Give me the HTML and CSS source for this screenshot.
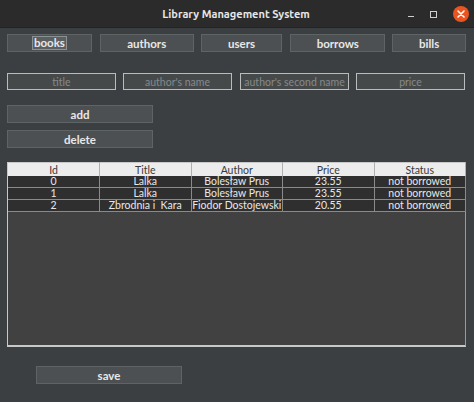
FILE: index.html
```html
<!DOCTYPE html>
<html lang="en">

<head>
    <meta charset="UTF-8">
    <title>Library Management System</title>
    <link rel="stylesheet" href="styles.css">
</head>

<body>
    <!-- Window title bar -->
    <header class="titlebar">
        <span class="title">Library Management System</span>
        <div class="controls">
            <span class="ctl min"></span>
            <span class="ctl max"></span>
            <span class="ctl close">
                <svg width="8" height="8" viewBox="0 0 8 8">
                    <path d="M1 1 L7 7 M7 1 L1 7" stroke="#fff" stroke-width="1.6" stroke-linecap="round" />
                </svg>
            </span>
        </div>
    </header>

    <div class="window">
        <!-- Navigation -->
        <nav class="nav">
            <button class="btn nav-books"><span class="focus">books</span></button>
            <button class="btn nav-authors">authors</button>
            <button class="btn nav-users">users</button>
            <button class="btn nav-borrows">borrows</button>
            <button class="btn nav-bills">bills</button>
        </nav>

        <!-- Inputs -->
        <div class="fields">
            <input type="text" class="field f-title" placeholder="title">
            <input type="text" class="field f-author" placeholder="author's name">
            <input type="text" class="field f-second" placeholder="author's second name">
            <input type="text" class="field f-price" placeholder="price">
        </div>

        <div class="actions">
            <button class="btn wide">add</button>
            <button class="btn wide">delete</button>
        </div>

        <!-- Books table -->
        <div class="table-wrap">
            <table class="books">
                <thead>
                    <tr>
                        <th>Id</th>
                        <th>Title</th>
                        <th>Author</th>
                        <th>Price</th>
                        <th>Status</th>
                    </tr>
                </thead>
                <tbody>
                    <tr>
                        <td>0</td>
                        <td>Lalka</td>
                        <td>Bolesław Prus</td>
                        <td>23.55</td>
                        <td>not borrowed</td>
                    </tr>
                    <tr>
                        <td>1</td>
                        <td>Lalka</td>
                        <td>Bolesław Prus</td>
                        <td>23.55</td>
                        <td>not borrowed</td>
                    </tr>
                    <tr>
                        <td>2</td>
                        <td>Zbrodnia i&nbsp; Kara</td>
                        <td>Fiodor Dostojewski</td>
                        <td>20.55</td>
                        <td>not borrowed</td>
                    </tr>
                </tbody>
            </table>
        </div>

        <div class="footer">
            <button class="btn wide">save</button>
        </div>
    </div>
</body>

</html>
```

FILE: styles.css
```css
/* General */
html,
body {
    margin: 0;
    padding: 0;
    height: 100%;
    background-color: #3c3f41;
    font-family: Lato, "DejaVu Sans", sans-serif;
    overflow: hidden;
}

/* Title bar */
.titlebar {
    height: 28px;
    background-color: #2b2b2b;
    display: flex;
    align-items: center;
    justify-content: center;
    position: relative;
    border-bottom: 1px solid #232323;
    box-sizing: border-box;
}

.title {
    color: #e6e6e6;
    font-family: Ubuntu, "Open Sans", sans-serif;
    font-weight: bold;
    font-size: 11px;
    margin-left: -2px;
}

.controls {
    position: absolute;
    right: 5px;
    top: 0;
    height: 28px;
    display: flex;
    align-items: center;
    gap: 14px;
}

.ctl {
    width: 10px;
    height: 10px;
    display: flex;
    align-items: center;
    justify-content: center;
    box-sizing: border-box;
}

.ctl.min::before {
    content: "";
    width: 6px;
    height: 1.5px;
    margin-top: 5px;
    background-color: #cfcfcf;
}

.ctl.max {
    width: 7px;
    height: 7px;
    border: 1.5px solid #cfcfcf;
    margin-right: 2px;
}

.ctl.close {
    width: 16px;
    height: 16px;
    border-radius: 50%;
    background-color: #e95420;
}

/* Window body */
.window {
    padding: 6px 8px 0 7px;
}

.btn {
    background-color: #4c5052;
    border: 1px solid #5e6364;
    color: #e8e8e8;
    font-family: Lato, "DejaVu Sans", sans-serif;
    font-weight: bold;
    font-size: 11.5px;
    height: 18px;
    padding: 0;
    display: flex;
    align-items: center;
    justify-content: center;
    box-sizing: border-box;
}

.nav {
    display: flex;
    gap: 7px;
    height: 19px;
}

.nav-books { width: 85px; }
.nav-authors { width: 94px; margin-left: 1px; }
.nav-users { width: 82px; }
.nav-borrows { width: 95px; margin-left: 1px; }
.nav-bills { width: 74px; }

.focus {
    background-color: #5a5f62;
    border: 1px solid #8c9294;
    padding: 0 1px;
    line-height: 12px;
}

.fields {
    display: flex;
    gap: 7px;
    margin-top: 20px;
    height: 17px;
}

.field {
    width: 109px;
    height: 17px;
    box-sizing: border-box;
    background-color: #45494a;
    border: 1.5px solid #b8bcbd;
    color: #ddd;
    font-family: Lato, "DejaVu Sans", sans-serif;
    font-size: 10.5px;
    text-align: center;
    padding: 0;
    outline: none;
}

.field::placeholder {
    color: #85898b;
}

.f-second { margin-left: 1px; }

.actions {
    display: flex;
    flex-direction: column;
    gap: 7px;
    margin-top: 15px;
}

.wide {
    width: 146px;
}

/* Table */
.table-wrap {
    margin-top: 14px;
    width: 459px;
    height: 185px;
    background-color: #414141;
    border-left: 1px solid #c8c8c8;
    border-bottom: 2px solid #c8c8c8;
    border-right: 1px solid #9a9a9a;
    box-sizing: border-box;
}

.books {
    width: 458px;
    border-collapse: collapse;
    table-layout: fixed;
    font-family: Lato, "DejaVu Sans", sans-serif;
    font-size: 10.5px;
}

.books th {
    background-color: #ececec;
    color: #3a3a3a;
    font-weight: normal;
    height: 13px;
    padding: 0;
    border-right: 1px solid #b0b0b0;
    border-top: 1px solid #c8c8c8;
    line-height: 12px;
}

.books td {
    background-color: #2f2f2f;
    color: #e8e8e8;
    height: 11px;
    padding: 0;
    text-align: center;
    border: 1px solid #8a8a8a;
    border-top: none;
    line-height: 11px;
    white-space: nowrap;
    overflow: hidden;
}

.books td:first-child {
    border-left: none;
}

.footer {
    margin-top: 19px;
    padding-left: 29px;
}
```
